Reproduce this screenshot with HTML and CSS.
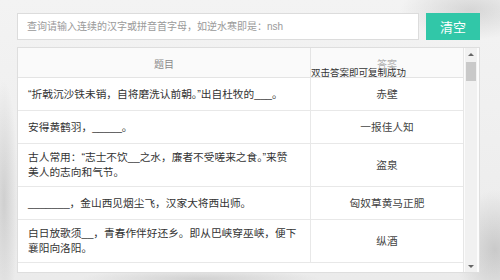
FILE: index.html
```html
<!DOCTYPE html>
<html lang="zh-CN">

<head>
    <meta charset="UTF-8">
    <meta name="viewport" content="width=device-width, initial-scale=1.0">
    <title>诗词答题助手</title>
    <link rel="stylesheet" href="styles.css">
</head>

<body>
    <div class="page">
        <div class="search">
            <input type="text" class="search-input" placeholder="查询请输入连续的汉字或拼音首字母，如逆水寒即是：nsh">
            <button class="clear-btn">清空</button>
        </div>

        <div class="panel">
            <div class="table-wrap">
                <table class="answers">
                    <thead>
                        <tr>
                            <th class="col-q">题目</th>
                            <th class="col-a">
                                答案
                                <span class="tip">双击答案即可复制成功</span>
                            </th>
                        </tr>
                    </thead>
                    <tbody>
                        <tr>
                            <td>“折戟沉沙铁未销，自将磨洗认前朝。”出自杜牧的___。</td>
                            <td class="answer">赤壁</td>
                        </tr>
                        <tr>
                            <td>安得黄鹤羽，_____。</td>
                            <td class="answer">一报佳人知</td>
                        </tr>
                        <tr>
                            <td>古人常用：“志士不饮__之水，廉者不受嗟来之食。”来赞<br>美人的志向和气节。</td>
                            <td class="answer">盗泉</td>
                        </tr>
                        <tr>
                            <td>_______，金山西见烟尘飞，汉家大将西出师。</td>
                            <td class="answer">匈奴草黄马正肥</td>
                        </tr>
                        <tr>
                            <td>白日放歌须__，青春作伴好还乡。即从巴峡穿巫峡，便下襄阳向洛阳。</td>
                            <td class="answer">纵酒</td>
                        </tr>
                    </tbody>
                </table>
            </div>

            <div class="scrollbar">
                <span class="arrow up"></span>
                <div class="track">
                    <div class="thumb"></div>
                </div>
                <span class="arrow down"></span>
            </div>
        </div>
    </div>
</body>

</html>
```

FILE: styles.css
```css
body {
    margin: 0;
    font-family: "Liberation Sans", "Noto Sans CJK SC", sans-serif;
    color: #333;
    background-color: #efefef;
    background-image:
        radial-gradient(ellipse 70px 30px at 470px 10px, rgba(160, 160, 160, 0.35), transparent),
        radial-gradient(ellipse 40px 60px at 495px 250px, rgba(150, 150, 150, 0.4), transparent),
        radial-gradient(ellipse 14px 120px at 4px 200px, rgba(150, 150, 150, 0.35), transparent),
        radial-gradient(ellipse 120px 10px at 200px 279px, rgba(170, 170, 170, 0.4), transparent),
        linear-gradient(180deg, #f3f3f3, #ebebeb);
    height: 280px;
    overflow: hidden;
}

.page {
    width: 463px;
    padding: 13px 0 0 17px;
}

.search {
    display: flex;
    gap: 7px;
    height: 27px;
}

.search-input {
    flex: 1;
    box-sizing: border-box;
    height: 27px;
    margin: 0;
    padding: 0 9px;
    border: 1px solid #dcdcdc;
    background-color: #fff;
    font-family: inherit;
    font-size: 10px;
    color: #333;
    outline: none;
}

.search-input::placeholder {
    color: #9a9a9a;
}

.clear-btn {
    width: 54px;
    height: 27px;
    margin: 0;
    padding: 0;
    border: none;
    background-color: #31c7a8;
    color: #fff;
    font-family: inherit;
    font-size: 13px;
    cursor: pointer;
}

.clear-btn:hover {
    background-color: #26b296;
}

.panel {
    display: flex;
    margin-top: 7px;
    height: 226px;
    box-sizing: border-box;
    border: 1px solid #dedede;
    background-color: #fcfcfc;
}

.table-wrap {
    flex: 1;
    overflow: hidden;
    border-right: 1px solid #e6e6e6;
    background-color: #fff;
}

.answers {
    width: 100%;
    border-collapse: collapse;
    font-size: 10.7px;
    line-height: 15px;
}

.answers th {
    position: relative;
    height: 26px;
    padding: 3px 0 0;
    font-weight: normal;
    font-size: 10px;
    color: #8a8a8a;
    background-color: #fafafa;
    border-bottom: 1px solid #e4e4e4;
}

.col-q {
    width: 292px;
    border-right: 1px solid #e4e4e4;
}

.col-a {
    color: #b0b0b0 !important;
}

.tip {
    position: absolute;
    left: 0;
    top: 19px;
    font-size: 9.5px;
    line-height: 11px;
    color: #333;
    white-space: nowrap;
}

.answers td {
    height: 20px;
    padding: 6px 10px;
    border-bottom: 1px solid #e8e8e8;
    text-align: left;
}

.answers td:first-child {
    border-right: 1px solid #e8e8e8;
}

.answers td.answer {
    text-align: center;
    color: #444;
}

.scrollbar {
    display: flex;
    flex-direction: column;
    width: 12px;
    margin: 0 2px 0 1px;
    background-color: #f1f1f1;
}

.arrow {
    height: 12px;
    display: flex;
    align-items: center;
    justify-content: center;
}

.arrow::before {
    content: "";
    border-left: 3px solid transparent;
    border-right: 3px solid transparent;
}

.arrow.up::before {
    border-bottom: 3px solid #666;
}

.arrow.down::before {
    border-top: 3px solid #666;
}

.track {
    flex: 1;
    padding: 2px 1px;
}

.thumb {
    height: 19px;
    background-color: #c9c9c9;
}
```
